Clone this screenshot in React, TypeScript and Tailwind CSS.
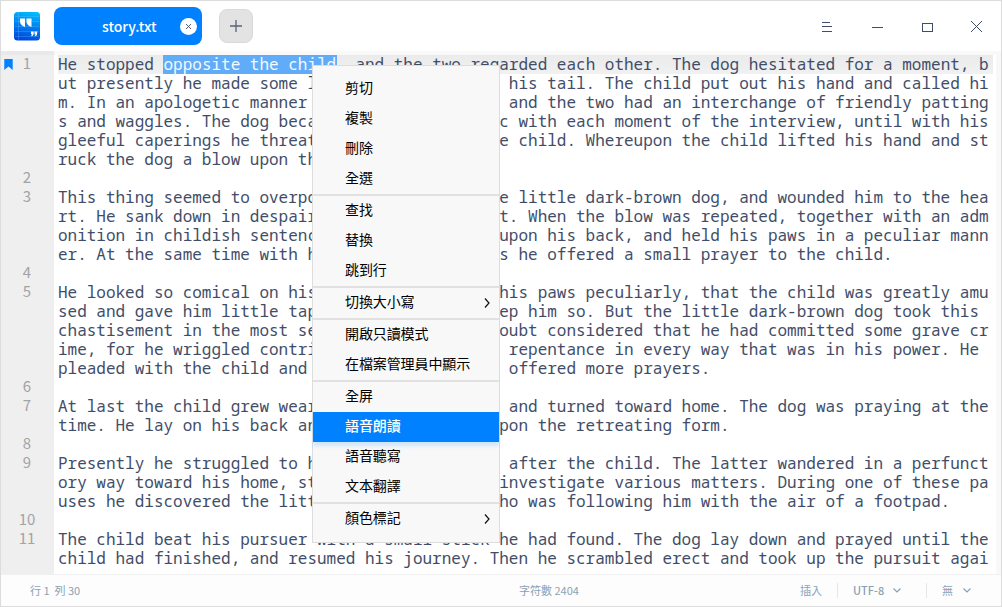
import React from "react";

type Line = { n?: number; text: string };

const lines: Line[] = [
  { n: 1, text: "He stopped |opposite the child|, and the two regarded each other. The dog hesitated for a moment, b" },
  { text: "ut presently he made some little advances with his tail. The child put out his hand and called hi" },
  { text: "m. In an apologetic manner the dog came close, and the two had an interchange of friendly patting" },
  { text: "s and waggles. The dog became more enthusiastic with each moment of the interview, until with his" },
  { text: "gleeful caperings he threatened to overturn the child. Whereupon the child lifted his hand and st" },
  { text: "ruck the dog a blow upon the head." },
  { n: 2, text: "" },
  { n: 3, text: "This thing seemed to overpower and astonish the little dark-brown dog, and wounded him to the hea" },
  { text: "rt. He sank down in despair at the child's feet. When the blow was repeated, together with an adm" },
  { text: "onition in childish sentences, he turned over upon his back, and held his paws in a peculiar mann" },
  { text: "er. At the same time with his ears and his eyes he offered a small prayer to the child." },
  { n: 4, text: "" },
  { n: 5, text: "He looked so comical on his back, and holding his paws peculiarly, that the child was greatly amu" },
  { text: "sed and gave him little taps repeatedly, to keep him so. But the little dark-brown dog took this " },
  { text: "chastisement in the most serious way, and no doubt considered that he had committed some grave cr" },
  { text: "ime, for he wriggled contritely and showed his repentance in every way that was in his power. He " },
  { text: "pleaded with the child and petitioned him, and offered more prayers." },
  { n: 6, text: "" },
  { n: 7, text: "At last the child grew weary of this amusement and turned toward home. The dog was praying at the" },
  { text: "time. He lay on his back and turned his eyes upon the retreating form." },
  { n: 8, text: "" },
  { n: 9, text: "Presently he struggled to his feet and started after the child. The latter wandered in a perfunct" },
  { text: "ory way toward his home, stopping at times to investigate various matters. During one of these pa" },
  { text: "uses he discovered the little dark-brown dog who was following him with the air of a footpad." },
  { n: 10, text: "" },
  { n: 11, text: "The child beat his pursuer with a small stick he had found. The dog lay down and prayed until the" },
  { text: "child had finished, and resumed his journey. Then he scrambled erect and took up the pursuit agai" },
];

type Item = { label: string; sub?: boolean; active?: boolean };

const groups: Item[][] = [
  [{ label: "剪切" }, { label: "複製" }, { label: "刪除" }, { label: "全選" }],
  [{ label: "查找" }, { label: "替換" }, { label: "跳到行" }],
  [{ label: "切換大小寫", sub: true }],
  [{ label: "開啟只讀模式" }, { label: "在檔案管理員中顯示" }],
  [{ label: "全屏" }, { label: "語音朗讀", active: true }, { label: "語音聽寫" }, { label: "文本翻譯" }],
  [{ label: "顏色標記", sub: true }],
];

function AppIcon() {
  return (
    <svg width="26" height="29" viewBox="0 0 26 29" className="shrink-0">
      <defs>
        <linearGradient id="app-bg" x1="0.6" y1="0" x2="0.4" y2="1">
          <stop offset="0" stopColor="#00bafb" />
          <stop offset="0.5" stopColor="#007cf0" />
          <stop offset="1" stopColor="#0046dc" />
        </linearGradient>
      </defs>
      <rect width="26" height="28.5" rx="3.5" fill="url(#app-bg)" />
      <path d="M1 4.5H25M1 9.500H25M1 14.500H25M1 19.500H25M1 24.500H25M4.500 0V28" stroke="#7fd0ff" strokeOpacity="0.3" strokeWidth="0.8" />
      <path d="M6 6.500H11V15C7.800 14 6 12 6 9.500ZM12.500 6.500H17.500V15C14.300 14 12.500 12 12.500 9.500Z" fill="#fff" />
      <path d="M17 19.500H19.700V21.500C19.700 23.200 18.700 24 17 24.200L18 22.200H17ZM20.500 19.500H23.200V21.500C23.200 23.200 22.200 24 20.500 24.200L21.500 22.200H20.500Z" fill="#fff" />
    </svg>
  );
}

function Header() {
  return (
    <header className="flex h-[50px] shrink-0 items-start bg-white">
      <div className="ml-[13px] mt-[11px]">
        <AppIcon />
      </div>
      <div className="ml-[14px] mt-[6px] flex h-[38px] w-[148px] items-center rounded-lg bg-[#0081ff] text-white">
        <span className="ml-12 w-[80px] text-[14px] font-medium leading-5">story.txt</span>
        <span className="-ml-[2.5px] flex h-[17px] w-[17px] items-center justify-center rounded-full bg-white">
          <svg width="7" height="7" viewBox="0 0 7 7">
            <path d="M1 1L6 6M6 1L1 6" stroke="#414d68" strokeWidth="0.9" />
          </svg>
        </span>
      </div>
      <div className="ml-[17px] mt-2 flex h-[34px] w-[34px] items-center justify-center rounded-lg border border-[#d9d9d9] bg-[#e3e3e3]">
        <svg width="12" height="12" viewBox="0 0 12 12">
          <path d="M6 0V12M0 6H12" stroke="#5a6378" strokeWidth="1.300" />
        </svg>
      </div>
      <div className="ml-auto mr-4 mt-[18px] flex items-center gap-[34px]">
        <svg width="16" height="16" viewBox="0 0 16 16" shapeRendering="crispEdges">
          <path d="M3 3.500H11M3 7.500H13M3 12.500H13" stroke="#414d68" />
        </svg>
        <svg width="16" height="16" viewBox="0 0 16 16" shapeRendering="crispEdges">
          <path d="M3 8.500H14" stroke="#414d68" />
        </svg>
        <svg width="16" height="16" viewBox="0 0 16 16" shapeRendering="crispEdges">
          <path d="M3.500 4.500H13.500V12.500H3.500Z" stroke="#414d68" fill="none" />
        </svg>
        <svg width="16" height="16" viewBox="0 0 16 16">
          <path d="M2 2L13 13M13 2L2 13" stroke="#414d68" strokeWidth="1" />
        </svg>
      </div>
    </header>
  );
}

function Row({ line, first }: { line: Line; first: boolean }) {
  const [before, selected, after] = line.text.split("|");
  return (
    <div className="flex h-[19px]">
      <div className="flex w-[53px] shrink-0 items-center">
        <span className="ml-[3px] w-[9px]">
          {first && (
            <svg width="9" height="11" viewBox="0 0 9 11">
              <path d="M0.300 0H8.700V11L4.500 7.500L0.300 11Z" fill="#0081ff" />
            </svg>
          )}
        </span>
        <span className="w-[28px] pb-[5px] text-center text-[15px] leading-[19px] text-[#a3a3a3]">{line.n}</span>
      </div>
      <div
        className={
          "ml-1 w-[935px] whitespace-pre indent-[-0.05px] font-['Noto_Sans_Mono','DejaVu_Sans_Mono',monospace] text-[16px] leading-[19px] tracking-[-0.006px] text-[#414d68] " +
          (first ? "bg-linear-to-b from-[#ebebeb] to-[#f1f1f1]" : "")
        }
      >
        {before}
        {selected && <span className="-ml-px -mr-px inline-block h-[19px] bg-[#60acf8] px-px indent-0 align-top text-[#f4f9ff]">{selected}</span>}
        {after}
      </div>
    </div>
  );
}

function ContextMenu() {
  return (
    <div className="absolute left-[311px] top-[64px] w-[188px] border border-[#dddddd] bg-[#f8f8f8] py-2 text-[14px] text-black">
      {groups.map((g, i) => (
        <div key={i} className={i > 0 ? "border-t-2 border-[#e1e1e1]" : ""}>
          {g.map((item) => (
            <div
              key={item.label}
              className={
                "flex h-[30px] items-center justify-between pl-8 pr-[9px] " +
                (item.active ? "bg-[#0081ff] font-medium text-white shadow-[0_4px_4px_rgba(0,129,255,0.16)]" : "")
              }
            >
              <span className="pb-[3px] tracking-[-0.1px]">{item.label}</span>
              {item.sub && (
                <svg width="6" height="10" viewBox="0 0 6 10" className="mb-px">
                  <path d="M1 0.500L5 5L1 9.500" stroke="#111" fill="none" strokeWidth="1.200" />
                </svg>
              )}
            </div>
          ))}
        </div>
      ))}
    </div>
  );
}

function Chevron() {
  return (
    <svg width="8" height="5" viewBox="0 0 8 5">
      <path d="M0.500 0.500L4 4L7.500 0.500" stroke="#8aa1b4" fill="none" strokeWidth="1.200" />
    </svg>
  );
}

function StatusBar() {
  return (
    <footer className="flex h-8 shrink-0 items-center border-t border-[#f0f0f0] bg-[#fdfdfd] text-[11px] text-[#8aa1b4]">
      <span className="ml-[29px] w-[489px]">行 1&nbsp; 列 30</span>
      <span className="w-[281px]">字符數 2404</span>
      <span className="w-[37px]">插入</span>
      <span className="h-[15px] w-px bg-[#e6e6e6]" />
      <span className="ml-[15px] w-[40px] font-medium">UTF-8</span>
      <Chevron />
      <span className="ml-[25px] h-[15px] w-px bg-[#e6e6e6]" />
      <span className="ml-[15px] w-[21px]">無</span>
      <Chevron />
    </footer>
  );
}

export default function App() {
  return (
    <div className="relative flex h-[607px] w-[1002px] flex-col overflow-hidden border border-[#dcdcdc] bg-white font-['Noto_Sans_CJK_TC','Noto_Sans',sans-serif]">
      <Header />
      <main className="flex min-h-0 grow">
        <div className="grow bg-[linear-gradient(to_right,#efefef_53px,#ffffff_53px)]">
          <div className="h-[4px] bg-black/[0.025]" />
          {lines.map((l, i) => (
            <Row key={i} line={l} first={i === 0} />
          ))}
        </div>
        <div className="w-[5px] bg-[#f8f8f8]" />
      </main>
      <StatusBar />
      <ContextMenu />
    </div>
  );
}
